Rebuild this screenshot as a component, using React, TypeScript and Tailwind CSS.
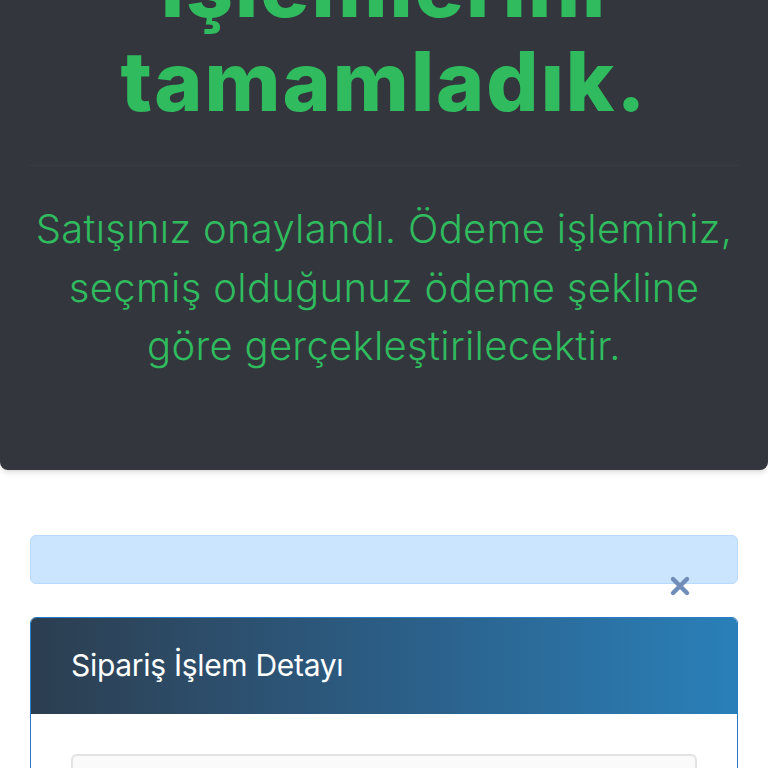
import { X } from 'lucide-react'

export default function App() {
  return (
    <div className="min-h-screen bg-white overflow-hidden" style={{ fontFamily: 'Inter, "Noto Sans", sans-serif' }}>
      {/* Success hero */}
      <section className="bg-[#33363d] rounded-b-lg shadow-md pb-[94px] text-center">
        <h1 className="-mt-[59px] text-[#2fbb5e] font-extrabold text-[82px] leading-[94px] tracking-[2px]">
          İşlemlerini
          <br />
          tamamladık.
        </h1>
        <div className="mx-[30px] mt-[36px] border-t border-[#393c43]" />
        <p className="mt-[34px] px-4 text-[#2fbb5e] font-light text-[40px] leading-[58.5px] tracking-[0.3px]">
          Satışınız onaylandı. Ödeme işleminiz,
          <br />
          seçmiş olduğunuz ödeme şekline
          <br />
          göre gerçekleştirilecektir.
        </p>
      </section>

      {/* Info alert */}
      <div className="relative mx-[30px] mt-[65px] h-[49px] rounded-md border border-[#b8daff] bg-[#cce5ff]">
        <X className="absolute right-[43px] top-[36px] w-[28px] h-[28px] text-[#6f8db8]" strokeWidth={3.8} />
      </div>

      {/* Order detail card */}
      <div className="mx-[30px] mt-[33px] rounded-t-md border border-[#2a7cc6] overflow-hidden">
        <div className="h-[96px] flex items-center px-[40px] bg-gradient-to-r from-[#2c3e50] via-[#2b5d85] to-[#2980b9]">
          <span className="text-white text-[30px] tracking-[-0.3px]">Sipariş İşlem Detayı</span>
        </div>
        <div className="bg-white px-[40px] pt-[40px] pb-10">
          <div className="h-[120px] rounded-md border-2 border-[#e3e3e3] bg-[#fafafa]" />
        </div>
      </div>
    </div>
  )
}
